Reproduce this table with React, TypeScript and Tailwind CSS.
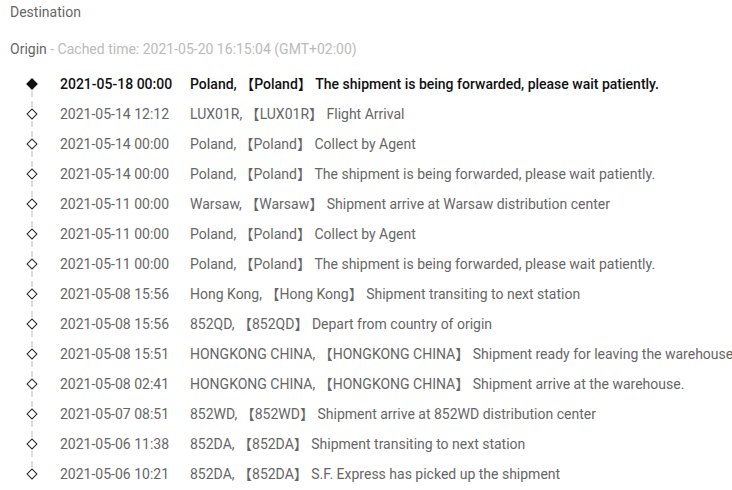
const events = [
  ["2021-05-18 00:00", "Poland", "The shipment is being forwarded, please wait patiently."],
  ["2021-05-14 12:12", "LUX01R", "Flight Arrival"],
  ["2021-05-14 00:00", "Poland", "Collect by Agent"],
  ["2021-05-14 00:00", "Poland", "The shipment is being forwarded, please wait patiently."],
  ["2021-05-11 00:00", "Warsaw", "Shipment arrive at Warsaw distribution center"],
  ["2021-05-11 00:00", "Poland", "Collect by Agent"],
  ["2021-05-11 00:00", "Poland", "The shipment is being forwarded, please wait patiently."],
  ["2021-05-08 15:56", "Hong Kong", "Shipment transiting to next station"],
  ["2021-05-08 15:56", "852QD", "Depart from country of origin"],
  ["2021-05-08 15:51", "HONGKONG CHINA", "Shipment ready for leaving the warehouse"],
  ["2021-05-08 02:41", "HONGKONG CHINA", "Shipment arrive at the warehouse."],
  ["2021-05-07 08:51", "852WD", "Shipment arrive at 852WD distribution center"],
  ["2021-05-06 11:38", "852DA", "Shipment transiting to next station"],
  ["2021-05-06 10:21", "852DA", "S.F. Express has picked up the shipment"],
];

export default function App() {
  return (
    <div
      className="w-[732px] h-[490px] overflow-hidden bg-white text-[14px] text-[#666]"
      style={{ fontFamily: 'Roboto, "Noto Sans CJK SC", sans-serif' }}
    >
      <div className="pl-[10px] pt-[2px] h-[20px] leading-[20px]">Destination</div>
      <div className="pl-[10px] mt-[19px] h-[20px] leading-[20px]">
        Origin <span className="text-[#bbb]">- Cached time: 2021-05-20 16:15:04 (GMT+02:00)</span>
      </div>

      {/* Tracking timeline */}
      <ul className="mt-[10px]">
        {events.map(([time, place, desc], i) => {
          const first = i === 0;
          const last = i === events.length - 1;
          return (
            <li
              key={i}
              className={`relative flex h-[30px] items-center whitespace-nowrap ${
                first ? "font-medium text-[#111]" : ""
              }`}
            >
              <div className="relative flex h-full w-[60px] shrink-0 items-center justify-center pl-[5px] pr-[2px]">
                <span
                  className={`block h-[8px] w-[8px] rotate-45 border-[1.5px] ${
                    first ? "border-[#111] bg-[#111]" : "border-[#222] bg-white"
                  }`}
                />
                {!last && (
                  <span className="absolute left-[31px] top-[22px] h-[16px] border-l-2 border-dashed border-[#ddd]" />
                )}
              </div>
              <span className="w-[130px] shrink-0">{time}</span>
              <span>
                {place}, 【{place}】 {desc}
              </span>
            </li>
          );
        })}
      </ul>
    </div>
  );
}
